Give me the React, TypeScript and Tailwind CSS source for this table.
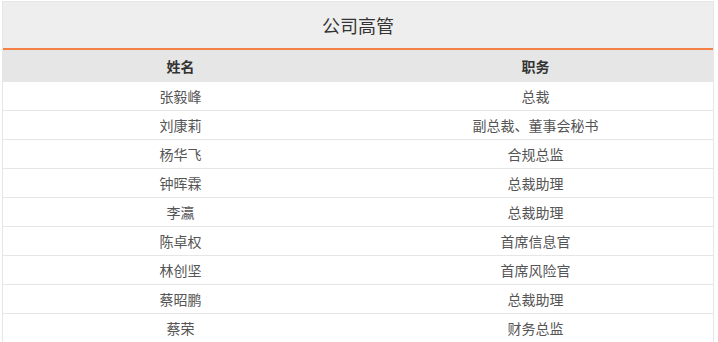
const rows: [string, string][] = [
  ["张毅峰", "总裁"],
  ["刘康莉", "副总裁、董事会秘书"],
  ["杨华飞", "合规总监"],
  ["钟晖霖", "总裁助理"],
  ["李瀛", "总裁助理"],
  ["陈卓权", "首席信息官"],
  ["林创坚", "首席风险官"],
  ["蔡昭鹏", "总裁助理"],
  ["蔡荣", "财务总监"],
];

export default function App() {
  return (
    <div
      className="min-h-screen bg-white pt-[1px] pl-[2px]"
      style={{ fontFamily: '"Noto Sans CJK SC", "Liberation Sans", sans-serif' }}
    >
      <div className="w-[712px] border border-b-0 border-[#e6e6e6]">
        {/* Title */}
        <div className="flex h-[46px] items-center justify-center bg-[#eeeeee] text-[18px] text-[#333]">
          公司高管
        </div>
        <div className="h-[2px] bg-[#f48045]" />

        {/* Header */}
        <div className="grid h-[32px] grid-cols-2 items-center bg-[#e6e6e6] text-[14px] font-bold text-[#333]">
          <div className="text-center">姓名</div>
          <div className="text-center">职务</div>
        </div>

        {/* Rows */}
        {rows.map(([name, title]) => (
          <div
            key={name}
            className="grid h-[29px] grid-cols-2 items-center border-b border-[#e6e6e6] text-[14px] text-[#555]"
          >
            <div className="text-center">{name}</div>
            <div className="text-center">{title}</div>
          </div>
        ))}
      </div>
    </div>
  );
}
